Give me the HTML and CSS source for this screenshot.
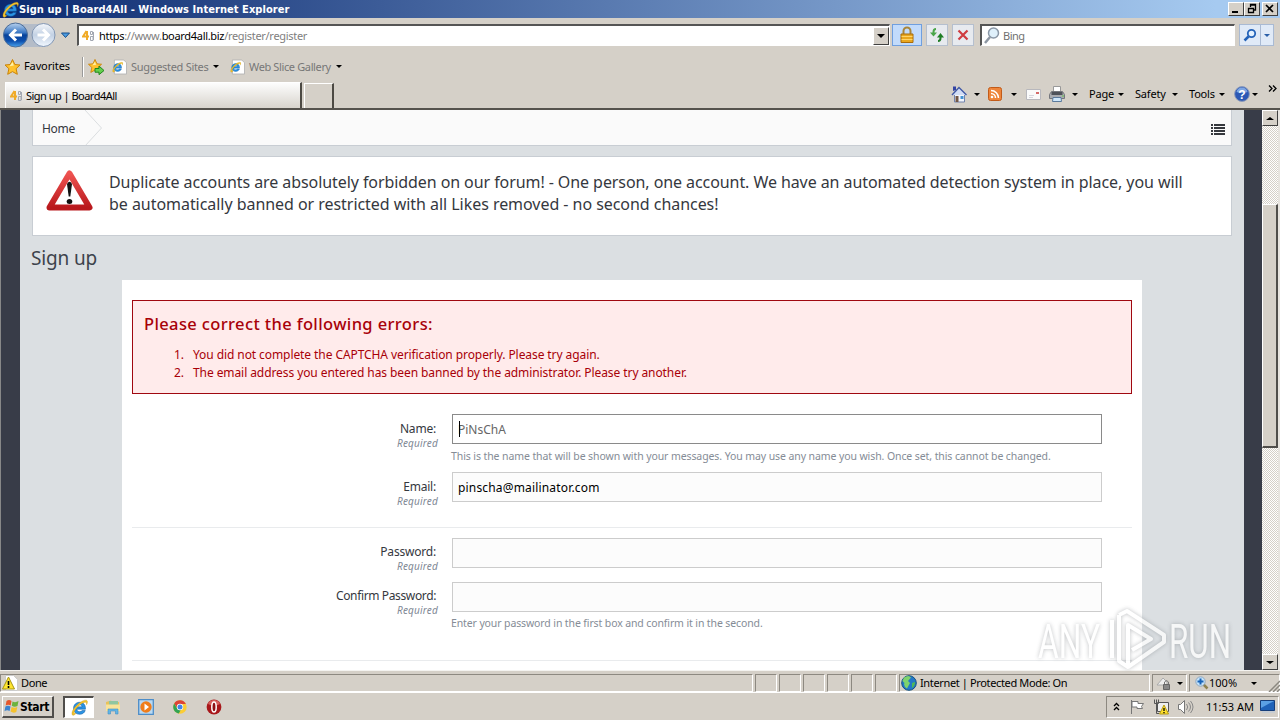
FILE: index.html
```html
<!DOCTYPE html>
<html lang="en">

<head>
    <meta charset="UTF-8">
    <meta name="viewport" content="width=device-width, initial-scale=1.0">
    <title>Sign up | Board4All</title>
    <link rel="stylesheet" href="styles.css">
</head>

<body>
    <!-- shared icons -->
    <svg class="defs" width="0" height="0">
        <defs>
            <linearGradient id="blue" x1="0" y1="0" x2="0" y2="1">
                <stop offset="0" stop-color="#b9d2ee" />
                <stop offset=".4" stop-color="#3b78c4" />
                <stop offset=".5" stop-color="#07429a" />
                <stop offset=".75" stop-color="#0c4fae" />
                <stop offset="1" stop-color="#49a4ee" />
            </linearGradient>
            <linearGradient id="silver" x1="0" y1="0" x2="0" y2="1">
                <stop offset="0" stop-color="#f4f7fb" />
                <stop offset=".5" stop-color="#c3d1e4" />
                <stop offset="1" stop-color="#f2f8ff" />
            </linearGradient>
            <linearGradient id="red" x1="0" y1="0" x2="0" y2="1">
                <stop offset="0" stop-color="#ee5350" />
                <stop offset="1" stop-color="#b9191d" />
            </linearGradient>
            <symbol id="ie" viewBox="0 0 16 16">
                <path d="M13.600 9.600H5.400c.2 1.600 1.300 2.300 2.800 2.300 1.100 0 1.800-.4 2.200-1.100h3c-.8 2.300-2.600 3.600-5.200 3.600-3.500 0-5.800-2.300-5.800-5.600 0-3.400 2.400-5.700 5.800-5.700 3.400 0 5.700 2.400 5.400 6.500zM5.500 7.400h4.900c-.2-1.300-1-2-2.400-2S5.700 6.100 5.500 7.400z" fill="#2a93e4" stroke="#0d5aa3" stroke-width=".5" />
                <path d="M1.500 15.200C-.6 13.200 3 7.500 7.500 4 11.500.9 15.500-.1 15.500 2.800c0 .9-.4 1.900-.9 2.700.3-1.800-.4-2.800-2-2.300C8.500 4.200 2.600 10.500 3 13c.1.700.8.800 1.900.4-1.300 1.200-2.600 2.400-3.400 1.800z" fill="#f3c32c" stroke="#b98a10" stroke-width=".3" />
            </symbol>
            <symbol id="iepage" viewBox="0 0 16 16">
                <path d="M2.500 .5h10l3 3v12h-13z" fill="#fff" stroke="#b5b5b5" />
                <svg x="0" y="2" width="12" height="12" viewBox="0 0 16 16"><use href="#ie" /></svg>
            </symbol>
            <symbol id="star" viewBox="0 0 16 16">
                <path d="M8 .5l2.300 5 5.200.5-3.900 3.700 1.200 5.600L8 12.600l-4.800 2.700 1.200-5.600L.5 6l5.200-.5z" fill="#ffc22e" stroke="#c98309" />
                <path d="M8 3l1.300 3.600-4.300.6z" fill="#fff2a8" />
            </symbol>
            <symbol id="fav" viewBox="0 0 13 12">
                <path d="M4.500 1L1 6.500h6M5 1v9" fill="none" stroke="#f0ab28" stroke-width="2" />
                <path d="M8.500 1.500h2v3h-2zm0 5h2.500v4H8.500zM11.500 2v8" fill="none" stroke="#a3a8b2" />
            </symbol>
        </defs>
    </svg>

    <div class="titlebar">
        <svg width="17" height="17"><use href="#ie" /></svg>
        <span class="title">Sign up | Board4All - Windows Internet Explorer</span>
        <div class="win-buttons">
            <div class="win-btn"><svg width="14" height="12"><path d="M3 9h6" stroke="#000" stroke-width="2" /></svg></div>
            <div class="win-btn"><svg width="14" height="12"><path d="M5.500 4V1.500h5V7H9M3.500 5.500h5v4h-5zM5 2h6M3 5.500h6" fill="none" stroke="#000" stroke-width="1.300" /></svg></div>
            <div class="win-btn close"><svg width="14" height="12"><path d="M3 2l7 7M10 2L3 9" stroke="#000" stroke-width="1.700" /></svg></div>
        </div>
    </div>

    <div class="navbar">
        <svg class="arrows" width="72" height="27">
            <path d="M14 2h29a12 12 0 0 1 0 23H14z" fill="#b4bcc8" />
            <circle cx="14.500" cy="13" r="12" fill="url(#blue)" stroke="#4c6d98" />
            <path d="M21 13H10M15 7.500L9.500 13l5.500 5.500" fill="none" stroke="#fff" stroke-width="3" />
            <circle cx="42.500" cy="13" r="11.500" fill="url(#silver)" stroke="#8296b3" />
            <path d="M36.500 13h10.500M42 7.500l5.500 5.500-5.500 5.500" fill="none" stroke="#fff" stroke-width="3" />
            <path d="M60.500 11h8l-4 4.500z" fill="#4b9be0" stroke="#174f8c" />
        </svg>
        <div class="address">
            <svg width="13" height="12"><use href="#fav" /></svg>
            <span class="url"><b>https</b>://www.<b>board4all.biz</b>/register/register</span>
            <div class="combo"><i class="tri"></i></div>
        </div>
        <div class="nav-btn lock">
            <svg width="16" height="18">
                <path d="M4.500 8V5a3.500 3.500 0 0 1 7 0v3" fill="none" stroke="#a9863a" stroke-width="2" />
                <path d="M2 8h12v8.500H2z" fill="#e9a71e" stroke="#a86c0c" />
                <path d="M2.500 10.500h11M2.500 13.500h11" stroke="#ffd469" />
            </svg>
        </div>
        <div class="nav-btn refresh">
            <svg width="16" height="16">
                <path d="M7 2Q4.500 2 4.500 5v1" fill="none" stroke="#4aa54a" stroke-width="2" />
                <path d="M1 5.500h7L4.500 9.500z" fill="#4aa54a" />
                <path d="M9 14q2.500 0 2.500-3v-1" fill="none" stroke="#1e7d24" stroke-width="2" />
                <path d="M8 10.500h7L11.500 6z" fill="#1e7d24" />
            </svg>
        </div>
        <div class="nav-btn stop">
            <svg width="14" height="14"><path d="M2.500 2.500l9 9M11.500 2.500l-9 9" stroke="#cf3c41" stroke-width="2.200" /></svg>
        </div>
        <div class="search">
            <svg width="16" height="17"><path d="M6 10l-5 6" stroke="#8d97a3" stroke-width="2.500" /><circle cx="9.500" cy="6" r="5" fill="#dff0fb" stroke="#8a97a6" stroke-width="1.500" /></svg>
            <span class="bing">Bing</span>
        </div>
        <div class="search-go">
            <div><svg width="14" height="14"><path d="M5.500 8.500L1.500 12.500" stroke="#2362b8" stroke-width="2.500" /><circle cx="8.500" cy="5.500" r="3.700" fill="#e3f1ff" stroke="#2362b8" stroke-width="1.800" /></svg></div>
            <div class="go-drop"><i class="tri small"></i></div>
        </div>
    </div>

    <div class="favbar">
        <svg width="17" height="16"><use href="#star" /></svg>
        <span class="fav-label">Favorites</span>
        <span class="divider"></span>
        <svg width="17" height="16">
            <svg width="14" height="14" viewBox="0 0 16 16"><use href="#star" /></svg>
            <path d="M7 9.500h4V7l5 4.500-5 4.200v-2.500H7z" fill="#64cf4d" stroke="#20861c" />
        </svg>
        <svg class="pg" width="15" height="16"><use href="#iepage" /></svg>
        <span class="link sites">Suggested Sites</span><i class="tri"></i>
        <svg class="pg second" width="15" height="16"><use href="#iepage" /></svg>
        <span class="link slice">Web Slice Gallery</span><i class="tri"></i>
    </div>

    <div class="tabrow">
        <div class="tab">
            <svg width="13" height="12"><use href="#fav" /></svg>
            <span>Sign up | Board4All</span>
        </div>
        <div class="newtab"></div>
        <div class="commands">
            <svg width="16" height="17">
                <path d="M3.500 8v8h10V7z" fill="#f3f6fd" stroke="#7284ad" />
                <path d="M2 5V.500h3V4" fill="#3344a4" />
                <path d="M1 9l7-7.500L15.500 9" fill="#d3def5" stroke="#4159a5" stroke-width="1.400" />
                <path d="M4.500 10h3v6h-3z" fill="#735745" /><path d="M9.500 10h3v3h-3z" fill="#4593d3" />
            </svg><i class="tri"></i>
            <svg class="rss" width="14" height="14">
                <rect x=".5" y=".5" width="13" height="13" rx="2" fill="#ee853b" stroke="#c25b19" />
                <circle cx="4" cy="10" r="1.300" fill="#fff" /><path d="M3 6.500A4.500 4.500 0 0 1 7.500 11M3 3.500A7.500 7.500 0 0 1 10.500 11" fill="none" stroke="#fff" stroke-width="1.500" />
            </svg><i class="tri"></i>
            <svg class="mail" width="15" height="11"><path d="M.5.500h14v10H.5z" fill="#fafafa" stroke="#b8b8bd" /><path d="M10 3h3v2h-3z" fill="#d46a69" /><path d="M3 6.500h5M3 8.500h4" stroke="#d5d5dc" /></svg>
            <svg class="printer" width="16" height="16">
                <path d="M4.500.5h7V6h-7z" fill="#fff" stroke="#999" />
                <path d="M2.500 5.500h11l2 3v4H.5v-4z" fill="#a9abb0" stroke="#75777d" />
                <path d="M2.500 6h11v3h-11z" fill="#4f5259" /><path d="M4 11.500h8l.5 4h-9z" fill="#cfe7fb" stroke="#5b7a9c" /><path d="M13 10h2" stroke="#66c84b" />
            </svg><i class="tri"></i>
            <span class="cmd page">Page</span><i class="tri"></i>
            <span class="cmd safety">Safety</span><i class="tri"></i>
            <span class="cmd tools">Tools</span><i class="tri"></i>
            <svg class="help" width="16" height="16"><circle cx="8" cy="8" r="7.400" fill="#2c58b5" stroke="#8d9bb9" /><path d="M2.500 6a5.600 5.600 0 0 1 11 0q-5 2-11 0z" fill="#7fa6e2" /><text x="8" y="12.500" text-anchor="middle" class="q">?</text></svg><i class="tri"></i>
            <svg class="more" width="9" height="7"><path d="M1 .5l3 3-3 3M5 .5l3 3-3 3" fill="none" stroke="#000" stroke-width="1.300" /></svg>
        </div>
    </div>

    <div class="viewport">
        <div class="site">
            <div class="breadcrumb">
                <span class="home">Home</span>
                <svg class="chev" width="20" height="35"><path d="M1 0l16.500 18L1 36" fill="none" stroke="#dbdee0" /></svg>
                <svg class="menu" width="14" height="12"><path d="M0 1h2M0 4h2M0 7h2M0 10h2M3 1h11M3 4h11M3 7h11M3 10h11" stroke="#35383d" stroke-width="2" /></svg>
            </div>
            <div class="notice">
                <svg width="50" height="46">
                    <path d="M25.500 5.500L45.500 39.500H5.500z" fill="#fff" stroke="url(#red)" stroke-width="6" stroke-linejoin="round" />
                    <path d="M23 16q2.500-4.500 5 0L26.300 28.500h-1.600z" fill="#111" /><ellipse cx="25.500" cy="33.500" rx="2.800" ry="2.500" fill="#111" />
                </svg>
                <p><span class="n1">Duplicate accounts are absolutely forbidden on our forum! - One person, one account. We have an automated detection system in place, you will</span><br><span class="n2">be automatically banned or restricted with all Likes removed - no second chances!</span></p>
            </div>
            <h1>Sign up</h1>
            <div class="form">
                <div class="errors">
                    <h2>Please correct the following errors:</h2>
                    <ol>
                        <li>You did not complete the CAPTCHA verification properly. Please try again.</li>
                        <li>The email address you entered has been banned by the administrator. Please try another.</li>
                    </ol>
                </div>
                <div class="row name">
                    <div class="label"><span>Name:</span><em>Required</em></div>
                    <div class="field">
                        <div class="input focus"><i class="caret"></i>PiNsChA</div>
                        <p class="hint">This is the name that will be shown with your messages. You may use any name you wish. Once set, this cannot be changed.</p>
                    </div>
                </div>
                <div class="row email">
                    <div class="label"><span>Email:</span><em>Required</em></div>
                    <div class="field">
                        <div class="input filled">pinscha@mailinator.com</div>
                    </div>
                </div>
                <div class="row password">
                    <div class="label"><span>Password:</span><em>Required</em></div>
                    <div class="field"><div class="input"></div></div>
                </div>
                <div class="row confirm">
                    <div class="label"><span>Confirm Password:</span><em>Required</em></div>
                    <div class="field">
                        <div class="input"></div>
                        <p class="hint">Enter your password in the first box and confirm it in the second.</p>
                    </div>
                </div>
            </div>
        </div>
        <div class="scrollbar">
            <div class="sb-btn"><i class="tri up"></i></div>
            <div class="track"><div class="thumb"></div></div>
            <div class="sb-btn"><i class="tri"></i></div>
        </div>
    </div>

    <div class="statusbar">
        <div class="pane done">
            <svg width="16" height="16"><path d="M3.500.5h8l4 4v11h-12z" fill="#fff" stroke="#ccc" /><path d="M6.500 2L12.500 14H.5z" fill="#ffe52e" stroke="#a89512" /><path d="M6.500 6v4M6.500 11v2" stroke="#000" stroke-width="1.600" /></svg>
            <span>Done</span>
        </div>
        <div class="pane s"></div>
        <div class="pane s"></div>
        <div class="pane s"></div>
        <div class="pane s"></div>
        <div class="pane s"></div>
        <div class="pane s"></div>
        <div class="pane zone">
            <svg width="16" height="16"><circle cx="8" cy="8" r="7.300" fill="#2378c8" stroke="#14527f" /><path d="M3 2.500Q8-.5 10 2.500L7 6l2 2-3 5.500Q2 11 3.500 8L1.500 6z" fill="#7ed36c" /><path d="M11 8l3-1q0 4-3 6z" fill="#4fba57" /></svg>
            <span>Internet | Protected Mode: On</span>
        </div>
        <div class="pane privacy">
            <svg width="17" height="15"><path d="M1 9l6-7 4 4v3z" fill="#eee" stroke="#aaa" /><path d="M7.500 8.500h6v5h-6z" fill="#888" stroke="#666" /><path d="M8.500 8V6q2-3 4 0v2" fill="none" stroke="#777" /></svg><i class="tri"></i>
        </div>
        <div class="pane zoom">
            <svg width="14" height="14"><path d="M8.500 8.500l4 4" stroke="#8f8350" stroke-width="2.500" /><circle cx="5.500" cy="5.500" r="4.700" fill="#c3e2fa" stroke="#91a8bf" /><path d="M5.500 2.500v6M2.500 5.500h6" stroke="#1763b8" stroke-width="2" /></svg>
            <span>100%</span><i class="tri"></i>
            <svg class="grip" width="12" height="12"><path d="M1 12L12 1M5 12l7-7M9 12l3-3" stroke="#8b8880" stroke-width="1.500" /></svg>
        </div>
    </div>

    <div class="taskbar">
        <div class="start">
            <svg width="16" height="15"><path d="M2.500 2q2.500-2 5 0L6.700 6.500q-2.500-1.500-5 0z" fill="#e5572c" /><path d="M8.500 2.500q3 1.500 6-.5L13.500 7q-3 1.500-5.700-.2z" fill="#6db33f" /><path d="M1.400 7.600q2.500-1.500 5.100 0L5.600 12Q3 10.500.5 12.200z" fill="#3b83d0" /><path d="M7.600 8q3 1.500 5.700 0l-1 5q-3 1.500-5.700-.5z" fill="#f5c22e" /></svg>
            <span>Start</span>
        </div>
        <div class="task-ie"><svg width="17" height="17"><use href="#ie" /></svg></div>
        <svg class="app" width="16" height="16"><path d="M1 3l5-1.500 1 1.500h7v8H1z" fill="#e7c25b" /><path d="M4 2h9v6H4z" fill="#8fc6a0" /><path d="M1 5.500h14V12H1z" fill="#f9e399" /><path d="M3 15v-5h10v5h-2.500v-3h-5v3z" fill="#62b5e7" stroke="#4592c4" stroke-width=".6" /></svg>
        <svg class="app" width="16" height="16"><path d="M.7.700h14.600v14.600H.7z" fill="#b9d9f2" stroke="#4d8dc8" stroke-width="1.300" /><circle cx="8" cy="8" r="5.700" fill="#ef7d1b" /><path d="M6.500 4.500L11 8l-4.500 3.500z" fill="#fff" /></svg>
        <svg class="app" width="16" height="16"><circle cx="8" cy="8" r="6.700" fill="#fbcd35" /><path d="M2.200 4.500A6.700 6.700 0 0 1 13.900 5H8a3 3 0 0 0-2.800 4z" fill="#dc4437" /><path d="M2.200 4.500l3.100 5.300q1.500 1.900 3.500 1.200l-2 3.600A6.700 6.700 0 0 1 2.200 4.500z" fill="#31a354" /><circle cx="8" cy="8" r="3.200" fill="#fff" /><circle cx="8" cy="8" r="2.500" fill="#4285e8" /></svg>
        <svg class="app" width="16" height="16"><circle cx="8" cy="8" r="7.400" fill="#a8171a" /><path d="M2 5a6.500 6.500 0 0 1 12 0q-6 3-12 0z" fill="#d85f5c" /><ellipse cx="8" cy="8" rx="2.200" ry="5" fill="#8e1013" stroke="#fff" stroke-width="1.500" /></svg>
        <div class="tray">
            <svg class="up" width="7" height="9"><path d="M1 4l2.500-2.500L6 4M1 8l2.500-2.500L6 8" fill="none" stroke="#000" stroke-width="1.300" /></svg>
            <svg class="flag" width="16" height="16"><path d="M2.500 1v14M3 2.500h6v2h5.500l-2 3 1 2H8v-1.500H3z" fill="#fff" stroke="#777" /></svg>
            <svg class="net" width="16" height="16"><path d="M4.500 3.500h11v9h-11z" fill="#eee" stroke="#555" /><path d="M1.500.5v4h4v-4M3.500.5v14H6" fill="none" stroke="#555" /><path d="M11 6l4.500 9h-9z" fill="#ffe12d" stroke="#b69a12" /><path d="M11 9v3M11 13v1.300" stroke="#000" stroke-width="1.300" /></svg>
            <svg class="snd" width="17" height="16"><path d="M1.500 5.500h2l4-4v13l-4-4h-2z" fill="#fff" stroke="#777" /><path d="M9.500 5q2.500 3 0 6M11.500 3.500q4 4.500 0 9M13.500 2q5 6 0 12" fill="none" stroke="#888" /></svg>
            <span class="clock">11:53 AM</span>
            <svg class="desk" width="15" height="13"><path d="M.5.500h14v10H.5z" fill="#1f62b8" stroke="#163e7a" /><path d="M1 1h13L1 8z" fill="#5ba0e4" /><path d="M2 12h13" stroke="#b8c8dc" /></svg>
        </div>
    </div>

    <svg class="watermark" width="218" height="76" viewBox="0 0 218 76">
        <text x="7" y="54" textLength="62" lengthAdjust="spacingAndGlyphs">ANY</text>
        <path d="M81 16v38M88 11v46l9 6V21l23 14-19 11M88 11l8-4 37 24v7L97 63" />
        <text x="138" y="54" textLength="62" lengthAdjust="spacingAndGlyphs">RUN</text>
    </svg>
</body>

</html>
```
FILE: styles.css
```css
* {
    margin: 0;
    padding: 0;
    box-sizing: border-box;
}

body {
    position: relative;
    width: 1280px;
    height: 720px;
    overflow: hidden;
    display: flex;
    flex-direction: column;
    background: #d5d0c8;
    font-family: "Noto Sans", "DejaVu Sans", sans-serif;
    font-size: 11px;
    line-height: 14px;
    color: #000;
    white-space: nowrap;
}

svg {
    display: block;
    flex: none;
}

.defs {
    position: absolute;
}

.tri {
    flex: none;
    width: 0;
    height: 0;
    border: 3px solid transparent;
    border-top-color: #000;
    border-bottom: 0;
}

.tri.up {
    border-top: 0;
    border-bottom: 3px solid #000;
}

.tri.small {
    border-top-color: #2a5fa8;
}

/* title bar */
.titlebar {
    height: 18px;
    flex: none;
    display: flex;
    align-items: center;
    padding: 0 2px;
    background: linear-gradient(to right, #0c2a70, #a6caf0 95%);
    color: #fff;
    font-weight: bold;
}

.title {
    padding-top: 1px;
    font-family: "DejaVu Sans Condensed", "DejaVu Sans", sans-serif;
    font-stretch: condensed;
    letter-spacing: 0.060px;
}

.win-buttons {
    margin-left: auto;
    display: flex;
}

.win-btn {
    width: 16px;
    height: 14px;
    background: #d5d0c8;
    border: 1px solid #fff;
    border-right-color: #404040;
    border-bottom-color: #404040;
}

.win-btn.close {
    margin-left: 2px;
}

/* address row */
.navbar {
    height: 34px;
    flex: none;
    display: flex;
    align-items: center;
    padding-left: 1px;
}

.address {
    margin-left: 4px;
    width: 813px;
    height: 22px;
    display: flex;
    align-items: center;
    padding-left: 3px;
    background: #fff;
    border: 1px solid #fff;
    border-top: 2px solid #555;
    border-left: 2px solid #555;
}

.url {
    margin-left: 4px;
    color: #808080;
    letter-spacing: -0.310px;
}

.url b {
    font-weight: normal;
    color: #000;
}

.combo {
    margin-left: auto;
    width: 16px;
    height: 18px;
    display: flex;
    align-items: center;
    justify-content: center;
    background: #d5d0c8;
    border: 1px solid #fff;
    border-right-color: #404040;
    border-bottom-color: #404040;
}

.combo .tri {
    border-width: 4px 4px 0;
}

.nav-btn {
    height: 22px;
    width: 22px;
    display: flex;
    align-items: center;
    justify-content: center;
    background: #e7eaef;
    border: 1px solid #b5bfce;
}

.nav-btn.lock {
    width: 30px;
    margin-left: 2px;
    background: #c2dbfb;
    border-color: #6f9fdf;
}

.refresh {
    margin-left: 4px;
}

.stop {
    margin-left: 4px;
}

.search {
    margin-left: 6px;
    width: 255px;
    height: 22px;
    display: flex;
    align-items: center;
    gap: 3px;
    padding-left: 2px;
    background: #fff;
    border: 1px solid #fff;
    border-top: 2px solid #555;
    border-left: 2px solid #555;
    color: #707070;
}

.bing {
    letter-spacing: -0.500px;
}

.search-go {
    margin-left: 4px;
    width: 35px;
    height: 22px;
    display: flex;
    background: #e0eaf7;
    border: 1px solid #a9bad3;
}

.search-go div {
    flex: 1;
    display: flex;
    align-items: center;
    justify-content: center;
}

.search-go .go-drop {
    flex: none;
    width: 13px;
    border-left: 1px solid #a9bad3;
}

/* favorites */
.favbar {
    height: 29px;
    flex: none;
    display: flex;
    align-items: center;
    padding-left: 4px;
}

.fav-label {
    margin-left: 3px;
    margin-bottom: 2px;
    width: 47px;
    letter-spacing: -0.120px;
}

.divider {
    width: 2px;
    height: 20px;
    margin: 0 4px 0 11px;
    border-left: 1px solid #999;
    border-right: 1px solid #fff;
}

.pg {
    margin-left: 7px;
}

.pg.second {
    margin-left: 11px;
}

.link {
    color: #777;
    margin-left: 4px;
}

.sites {
    width: 82px;
    letter-spacing: -0.300px;
}

.slice {
    width: 87px;
    letter-spacing: -0.370px;
}

/* tabs */
.tabrow {
    height: 29px;
    flex: none;
    display: flex;
    align-items: flex-end;
    padding-left: 5px;
    border-bottom: 2px solid #55524d;
}

.tab {
    width: 297px;
    height: 26px;
    display: flex;
    align-items: center;
    gap: 3px;
    padding-left: 4px;
    background: linear-gradient(#fdfdfd, #d8d4cd);
    border: 1px solid #fff;
    border-right: 2px solid #4c4943;
    border-bottom: 0;
    letter-spacing: -0.520px;
}

.newtab {
    width: 30px;
    height: 25px;
    margin-left: 2px;
    border: 1px solid #fff;
    border-right: 2px solid #4c4943;
    border-bottom: 0;
}

.commands {
    flex: 1;
    height: 28px;
    display: flex;
    align-items: center;
    padding-left: 617px;
}

.commands .tri {
    margin-left: 7px;
}

.commands .cmd + .tri {
    margin-left: 4px;
}

.rss {
    margin-left: 8px;
}

.commands .rss + .tri {
    margin-left: 9px;
}

.mail {
    margin-left: 9px;
}

.printer {
    margin-left: 8px;
}

.cmd {
    letter-spacing: -0.200px;
}

.page {
    width: 25px;
    margin-left: 11px;
}

.safety {
    width: 33px;
    margin-left: 11px;
}

.tools {
    width: 26px;
    margin-left: 11px;
}

.help {
    margin-left: 9px;
}

.commands .help + .tri {
    margin-left: 2px;
}

.q {
    font: bold 12px "Liberation Sans", sans-serif;
    fill: #fff;
}

.more {
    margin-left: 10px;
    margin-bottom: 12px;
}

/* page */
.viewport {
    height: 560px;
    flex: none;
    display: flex;
    overflow: hidden;
    background: #383c48;
    border-left: 1px solid #888;
}

.site {
    margin-left: 19px;
    width: 1224px;
    padding: 0 12px;
    background: #dbdfe2;
    color: #35383e;
}

.breadcrumb {
    height: 36px;
    display: flex;
    align-items: center;
    padding: 0 6px 0 9px;
    background: #fafafa;
    border: 1px solid #c8cdd3;
    border-top: 0;
    font-size: 12px;
}

.home {
    padding-top: 2px;
    letter-spacing: -0.300px;
}

.chev {
    margin-left: 9px;
}

.menu {
    margin-left: auto;
    margin-top: 4px;
}

.notice {
    height: 80px;
    margin-top: 10px;
    display: flex;
    padding: 11px 0 0 11px;
    background: #fff;
    border: 1px solid #c8cdd3;
}

.notice p {
    margin: 3px 0 0 15px;
    font-size: 16px;
    line-height: 22px;
}

.n1 {
    letter-spacing: -0.078px;
}

.n2 {
    letter-spacing: -0.045px;
}

h1 {
    height: 44px;
    margin-left: -1px;
    font-size: 19px;
    font-weight: normal;
    line-height: 44px;
    letter-spacing: -0.150px;
    color: #3d434c;
}

.form {
    width: 1020px;
    height: 400px;
    margin-left: 90px;
    padding: 20px 10px;
    background: #fff;
}

.errors {
    height: 94px;
    padding: 12px 11px;
    background: #ffebeb;
    border: 1px solid #a00810;
    color: #a80008;
}

.errors h2 {
    font-size: 16.500px;
    font-weight: 500;
    line-height: 22px;
    letter-spacing: 0.370px;
}

.errors ol {
    margin: 11px 0 0 43px;
    font-size: 12px;
    line-height: 18px;
    letter-spacing: -0.082px;
}

.errors li {
    padding-left: 6px;
}

.row {
    display: flex;
    font-size: 12px;
}

.label {
    width: 306px;
    padding-top: 6px;
    text-align: right;
}

.name .label,
.email .label {
    padding-top: 7px;
}

.label span {
    display: block;
    line-height: 16px;
    margin-right: 2px;
    letter-spacing: -0.200px;
}

.confirm .label span {
    letter-spacing: -0.370px;
}

.label em {
    display: block;
    margin-top: -1px;
    font-size: 10px;
    line-height: 14px;
    letter-spacing: 0.200px;
    color: #808895;
}

.field {
    margin-left: 14px;
}

.input {
    width: 650px;
    height: 30px;
    padding-left: 5px;
    background: #fcfcfc;
    border: 1px solid #ccc;
    line-height: 29px;
}

.input.focus {
    position: relative;
    background: #fff;
    border-color: #8a8a8a;
    color: #666;
}

.input.filled {
    color: #000;
    letter-spacing: 0.170px;
}

.caret {
    position: absolute;
    left: 6px;
    top: 6px;
    width: 1px;
    height: 16px;
    background: #000;
}

.hint {
    margin: 5px 0 0 -1px;
    font-size: 10.500px;
    letter-spacing: -0.095px;
    color: #858c96;
}

.confirm .hint {
    margin-top: 4px;
    letter-spacing: -0.120px;
}

.name {
    margin-top: 20px;
    height: 58px;
}

.email {
    height: 56px;
    border-bottom: 1px solid #e9ebed;
}

.password {
    padding-top: 10px;
    height: 54px;
}

.confirm {
    height: 79px;
    border-bottom: 1px solid #e9ebed;
}

/* scrollbar */
.scrollbar {
    margin-left: 18px;
    width: 18px;
    display: flex;
    flex-direction: column;
    border-right: 2px solid #e7e4df;
}

.sb-btn {
    height: 16px;
    display: flex;
    align-items: center;
    justify-content: center;
    background: #d5d0c8;
    border: 1px solid #fff;
    border-right-color: #404040;
    border-bottom-color: #404040;
}

.sb-btn .tri {
    border-left-width: 4px;
    border-right-width: 4px;
}

.track {
    flex: 1;
    padding-top: 78px;
    background: repeating-conic-gradient(#fff 0 25%, #d5d0c8 0 50%) 0 0 / 2px 2px;
}

.thumb {
    height: 244px;
    background: #d5d0c8;
    border: 1px solid #fff;
    border-right: 2px solid #504e4b;
    border-bottom: 2px solid #504e4b;
}

/* status bar */
.statusbar {
    height: 23px;
    flex: none;
    display: flex;
    padding-top: 3px;
    gap: 2px;
    border-top: 1px solid #f4f3f0;
    border-bottom: 1px solid #fff;
}

.pane {
    height: 18px;
    display: flex;
    align-items: center;
    border: 1px solid #8d8981;
    border-right-color: #fff;
    border-bottom-color: #fff;
}

.done {
    width: 753px;
    gap: 3px;
    padding-left: 1px;
    letter-spacing: -0.400px;
}

.s {
    width: 22px;
}

.zone {
    width: 251px;
    padding-left: 1px;
    gap: 3px;
    letter-spacing: -0.360px;
}

.privacy {
    width: 35px;
    padding-left: 3px;
    gap: 4px;
}

.zoom {
    width: 91px;
    padding-left: 5px;
}

.zoom .tri {
    margin-left: 14px;
}

.grip {
    margin-left: 11px;
    margin-top: 5px;
}

/* taskbar */
.taskbar {
    height: 27px;
    display: flex;
    align-items: center;
    padding-left: 2px;
}

.start {
    width: 52px;
    height: 22px;
    display: flex;
    align-items: center;
    padding-left: 1px;
    border: 1px solid #fff;
    border-right: 2px solid #504e4b;
    border-bottom: 2px solid #504e4b;
    font: bold 12px "DejaVu Sans Condensed", "DejaVu Sans", sans-serif;
    font-stretch: condensed;
    letter-spacing: -0.300px;
}

.start span {
    padding-top: 2px;
}

.task-ie {
    width: 31px;
    height: 22px;
    margin: 0 11px 0 9px;
    display: flex;
    align-items: center;
    justify-content: center;
    background: #fff;
    border: 1px solid #fff;
    border-top: 2px solid #504e4b;
    border-left: 2px solid #504e4b;
}

.app {
    margin-right: 18px;
}

.app:nth-of-type(1) {
    margin-right: 17px;
}

.tray {
    margin-left: auto;
    width: 173px;
    height: 22px;
    margin-right: 1px;
    display: flex;
    align-items: center;
    padding-left: 6px;
    border: 1px solid #8d8981;
    border-right-color: #fff;
    border-bottom-color: #fff;
}

.flag {
    margin-left: 9px;
}

.net {
    margin-left: 8px;
}

.snd {
    margin-left: 8px;
}

.clock {
    margin-left: 12px;
    width: 46px;
}

.desk {
    margin-left: 8px;
}

.watermark {
    position: absolute;
    left: 1031px;
    top: 604px;
    overflow: visible;
    opacity: .75;
    filter: drop-shadow(0 0 2px rgba(110, 115, 120, .6));
}

.watermark text {
    font-family: Roboto, "Liberation Sans", sans-serif;
    font-size: 48px;
    fill: #fff;
}

.watermark path {
    fill: none;
    stroke: #fff;
    stroke-width: 4;
    stroke-linejoin: round;
}
```
